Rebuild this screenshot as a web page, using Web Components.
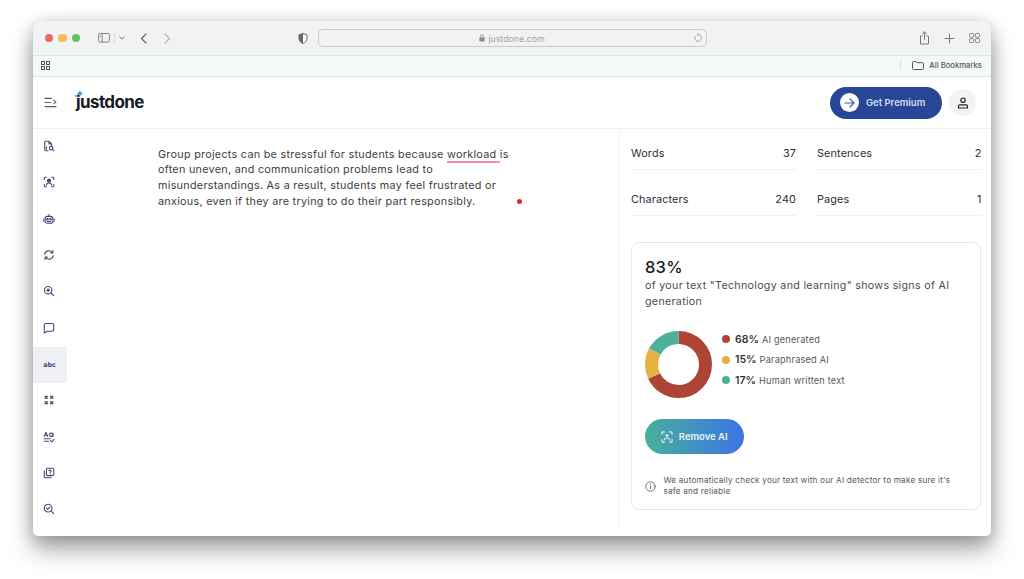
<!DOCTYPE html>
<html lang="en">
<head>
<meta charset="utf-8">
<title>justdone</title>
<style>
  html, body { margin: 0; height: 100%; background: #fff; }
  body { padding: 21px 33px 0; box-sizing: border-box; height: 579px; overflow: hidden; font-family: Inter, "Liberation Sans", sans-serif; }
</style>
</head>
<body>
<browser-window>
  <app-header slot="header"></app-header>
  <side-nav slot="nav"></side-nav>
  <text-editor slot="editor">
    <div>Group projects can be stressful for students because <mark-word>workload</mark-word> is</div>
    <div>often uneven, and communication problems lead to</div>
    <div>misunderstandings. As a result, students may feel frustrated or</div>
    <div>anxious, even if they are trying to do their part responsibly.</div>
  </text-editor>
  <aside-panel slot="panel">
    <stat-grid>
      <stat-item label="Words" value="37"></stat-item>
      <stat-item label="Sentences" value="2"></stat-item>
      <stat-item label="Characters" value="240"></stat-item>
      <stat-item label="Pages" value="1"></stat-item>
    </stat-grid>
    <ai-report></ai-report>
  </aside-panel>
</browser-window>

<script>
const scanIcon = (color) => `
  <svg width="12" height="12" viewBox="0 0 13 13" fill="none" stroke="${color}" stroke-width="1.2" stroke-linecap="round">
    <path d="M1 3.6V2.2A1.2 1.2 0 0 1 2.2 1h1.4M9.4 1h1.4A1.2 1.2 0 0 1 12 2.2v1.4M12 9.4v1.4a1.2 1.2 0 0 1-1.2 1.2H9.4M3.6 12H2.2A1.2 1.2 0 0 1 1 10.800V9.400"/>
    <circle cx="6.500" cy="5" r="1.600" fill="${color}" stroke="none"/>
    <path d="M3.400 9.800c.5-1.600 1.700-2.200 3.100-2.200s2.600.6 3.100 2.200"/>
  </svg>`;

class BrowserWindow extends HTMLElement {
  constructor() {
    super();
    this.attachShadow({ mode: "open" });
  }

  connectedCallback() {
    this.shadowRoot.innerHTML = `
      <style>
        :host {
          display: flex; flex-direction: column;
          width: 958px; height: 515px;
          border-radius: 9px 9px 5px 5px;
          background: #fff;
          box-shadow: 0 14px 24px rgba(0,0,0,.34), 0 2px 16px rgba(0,0,0,.2);
          overflow: hidden;
        }
        .toolbar {
          flex: none; height: 35px; box-sizing: border-box;
          background: #f1f2f4; border-bottom: 1px solid #e2e3e5;
          display: flex; align-items: center;
          position: relative;
        }
        .lights { display: flex; gap: 5.300px; margin-left: 12px; }
        .lights i { width: 8.200px; height: 8.200px; border-radius: 50%; display: block; }
        .group { display: flex; align-items: center; }
        .url {
          width: 389px; height: 18.500px; box-sizing: border-box;
          margin-left: 9.500px;
          border: 1px solid #c9cacd; border-radius: 5px;
          display: flex; align-items: center; justify-content: center; gap: 3px;
          font: 8.800px Inter, "Liberation Sans", sans-serif; color: #a2a3a6;
          position: relative;
        }
        .url svg.reload { position: absolute; right: 3px; top: 3px; }
        .bookmarks {
          flex: none; height: 21px; box-sizing: border-box;
          background: #f3faf8; border-bottom: 1px solid #e4e9e8;
          display: flex; align-items: center; padding: 0 9px 2px 8px;
          font: 500 7.700px Inter, "Liberation Sans", sans-serif; color: #55585a;
        }
        .bookmarks .bar { width: 1px; height: 10px; background: #bdebe0; margin: 0 11px 0 auto; }
        .bookmarks .folder { margin-right: 5px; }
        .body { flex: 1; min-height: 0; display: flex; }
        .main { flex: 1; min-width: 0; min-height: 0; display: flex; }
      </style>
      <div class="toolbar">
        <div class="lights">
          <i style="background:#ee6a5f"></i><i style="background:#f4bd4f"></i><i style="background:#61c454"></i>
        </div>
        <div class="group" style="margin-left:18px">
          <svg width="12" height="10" viewBox="0 0 13 11" fill="none" stroke="#77797c" stroke-width="1"><rect x=".5" y=".5" width="12" height="9.500" rx="1.500"/><path d="M4.500 .5v9.500"/><path d="M1.800 2.500h1.500M1.800 4h1.500" stroke-width=".7"/></svg>
          <span style="width:1px;height:11px;background:#dcdde0;margin:0 4px 0 4px"></span>
          <svg width="6" height="4" viewBox="0 0 6 4" fill="none" stroke="#77797c" stroke-width="1" stroke-linecap="round"><path d="M.7.7 3 3.200 5.300.7"/></svg>
        </div>
        <svg style="margin-left:15px" width="8" height="11" viewBox="0 0 8 11" fill="none" stroke="#66686b" stroke-width="1.200" stroke-linecap="round" stroke-linejoin="round"><path d="M6 1 1.500 5.500 6 10"/></svg>
        <svg style="margin-left:15.300px" width="8" height="11" viewBox="0 0 8 11" fill="none" stroke="#b6b7ba" stroke-width="1.200" stroke-linecap="round" stroke-linejoin="round"><path d="M2 1l4.500 4.500L2 10"/></svg>
        <svg style="margin-left:126.600px" width="10" height="11" viewBox="0 0 10 11"><path d="M5 .5 9 1.800v3.400C9 7.800 7.200 9.600 5 10.500 2.800 9.600 1 7.800 1 5.200V1.800z" fill="#fff" stroke="#66686b"/><path d="M5 .5v10C2.800 9.600 1 7.800 1 5.200V1.800z" fill="#66686b"/></svg>
        <div class="url">
          <svg width="6" height="8" viewBox="0 0 6 8"><rect x=".3" y="3.200" width="5.400" height="4.300" rx=".8" fill="#8c8d90"/><path d="M1.500 3.500V2.200a1.500 1.500 0 0 1 3 0v1.300" fill="none" stroke="#8c8d90" stroke-width=".8"/></svg>
          <span>justdone.com</span>
          <svg class="reload" width="10" height="10" viewBox="0 0 10 10" fill="none" stroke="#9c9da0" stroke-width=".9" stroke-linecap="round"><path d="M5.400 1.500A3.400 3.400 0 1 1 2 3.400"/><path d="M4.400.5 5.600 1.500 4.400 2.700"/></svg>
        </div>
        <div class="group" style="margin-left:auto;margin-right:11.500px;gap:14px">
          <svg width="11" height="14" viewBox="0 0 11 14" fill="none" stroke="#77797c" stroke-width="1" stroke-linecap="round" stroke-linejoin="round"><path d="M3.300 5H1.500v8h8V5H7.700M5.500 8.500V1M3.500 2.800l2-1.800 2 1.800"/></svg>
          <svg width="11" height="11" viewBox="0 0 11 11" stroke="#77797c" stroke-width="1" stroke-linecap="round"><path d="M5.500 1v9M1 5.500h9"/></svg>
          <svg width="11" height="10" viewBox="0 0 11 10" fill="none" stroke="#77797c" stroke-width=".9"><rect x=".5" y=".5" width="4.200" height="3.800" rx="1"/><rect x="6.300" y=".5" width="4.200" height="3.800" rx="1"/><rect x=".5" y="5.700" width="4.200" height="3.800" rx="1"/><rect x="6.300" y="5.700" width="4.200" height="3.800" rx="1"/></svg>
        </div>
      </div>
      <div class="bookmarks">
        <svg width="9" height="9" viewBox="0 0 9 9" fill="none" stroke="#55585a" stroke-width="1"><rect x=".5" y=".5" width="3" height="3"/><rect x="5.500" y=".5" width="3" height="3"/><rect x=".5" y="5.500" width="3" height="3"/><rect x="5.500" y="5.500" width="3" height="3"/></svg>
        <span class="bar"></span>
        <svg class="folder" width="12" height="9" viewBox="0 0 12 9" fill="none" stroke="#55585a" stroke-width="1" stroke-linejoin="round"><path d="M.5 1.500a1 1 0 0 1 1-1h2.500l1 1.200h5.500a1 1 0 0 1 1 1v4.800a1 1 0 0 1-1 1h-9a1 1 0 0 1-1-1z"/></svg>
        <span>All Bookmarks</span>
      </div>
      <slot name="header"></slot>
      <div class="body">
        <slot name="nav"></slot>
        <div class="main">
          <slot name="editor"></slot>
          <slot name="panel"></slot>
        </div>
      </div>
    `;
  }
}

class AppHeader extends HTMLElement {
  constructor() {
    super();
    this.attachShadow({ mode: "open" });
  }

  connectedCallback() {
    this.shadowRoot.innerHTML = `
      <style>
        :host {
          flex: none; display: flex; align-items: center;
          height: 52px; box-sizing: border-box;
          border-bottom: 1px solid #eff0f2;
          padding: 0 15px 0 11px;
          background: #fff;
        }
        .logo {
          position: relative; margin-left: 19px; padding-bottom: 1px;
          font: 700 17px/1 Inter, "Liberation Sans", sans-serif;
          letter-spacing: -.6px; color: #141a26;
        }
        .logo svg { position: absolute; left: -2px; top: -5px; }
        .premium {
          margin-left: auto;
          display: flex; align-items: center; gap: 7.500px;
          width: 112px; height: 32px; box-sizing: border-box; padding-left: 10px;
          border-radius: 16px; background: #274796;
          font: 600 9.500px Inter, "Liberation Sans", sans-serif; color: #d5def2;
        }
        .premium b {
          width: 19px; height: 19px; border-radius: 50%; background: #fff;
          display: flex; align-items: center; justify-content: center;
        }
        .user {
          margin-left: 7.500px; width: 27px; height: 27px; border-radius: 50%;
          background: #f3f3f4; display: flex; align-items: center; justify-content: center;
        }
      </style>
      <svg width="13" height="11" viewBox="0 0 14 12" fill="none" stroke="#55585c" stroke-width="1.100" stroke-linecap="round" stroke-linejoin="round"><path d="M1 1.500h7M1 6h6M1 10.500h12M10.500 3.300 13 5.500l-2.500 2"/></svg>
      <div class="logo">
        <svg width="10" height="10" viewBox="0 0 10 10"><path d="M6 1 7 3.500 9.500 4.500 7 5.500 6 8 5 5.500 2.500 4.500 5 3.500z" fill="#3f97d8"/><circle cx="1.800" cy="6.800" r=".9" fill="#3f97d8"/></svg>
        justdone
      </div>
      <div class="premium">
        <b><svg width="11" height="10" viewBox="0 0 11 10" fill="none" stroke="#3d5cab" stroke-width="1.200" stroke-linecap="round" stroke-linejoin="round"><path d="M1 5h9M6 1l4 4-4 4"/></svg></b>
        <span>Get Premium</span>
      </div>
      <div class="user">
        <svg width="12" height="12" viewBox="0 0 12 12" fill="none" stroke="#222" stroke-width="1.200" stroke-linejoin="round"><circle cx="6" cy="3.200" r="2.200"/><path d="M1.500 11V9.300C1.500 8.400 2.200 7.800 3 7.800h6c.8 0 1.500.6 1.500 1.500V11z"/></svg>
      </div>
    `;
  }
}

class SideNav extends HTMLElement {
  constructor() {
    super();
    this.attachShadow({ mode: "open" });
  }

  connectedCallback() {
    const c = "#474c75";
    const icon = (inner) => `<svg width="12" height="12" viewBox="0 0 14 14" fill="none" stroke="${c}" stroke-width="1.300" stroke-linecap="round" stroke-linejoin="round">${inner}</svg>`;
    const items = [
      icon(`<path d="M6 12.500H3a1 1 0 0 1-1-1v-9a1 1 0 0 1 1-1h4l3 3v2.500M7 1.500v3h3"/><path d="M4 8v2.500"/><circle cx="9.500" cy="9.500" r="2"/><path d="m11 11 1.500 1.500"/>`),
      icon(`<path d="M1.500 4V2.500a1 1 0 0 1 1-1H4M10 1.500h1.500a1 1 0 0 1 1 1V4M12.500 10v1.500a1 1 0 0 1-1 1H10M4 12.500H2.500a1 1 0 0 1-1-1V10"/><circle cx="7" cy="5.500" r="1.800" fill="${c}"/><path d="M3.800 10.500C4.300 8.800 5.500 8.200 7 8.200s2.700.6 3.200 2.300"/>`),
      icon(`<rect x="2.500" y="4" width="9" height="8" rx="2.500"/><path d="M7 1.500V4M1 7v2.500M13 7v2.500"/><circle cx="5.200" cy="7.300" r=".9" fill="${c}"/><circle cx="8.800" cy="7.300" r=".9" fill="${c}"/><path d="M5 10h4"/>`),
      icon(`<path d="M2 6.200A5 5 0 0 1 11 4.200M12 7.800a5 5 0 0 1-9 2"/><path d="M11.500 1.800v2.700H9M2.500 12.200V9.500H5"/>`),
      icon(`<circle cx="6" cy="6" r="4.300"/><circle cx="6" cy="6" r="1.800" fill="${c}" stroke="none"/><path d="m9.300 9.300 3.200 3.200"/>`),
      icon(`<path d="M3.500 1.800h7a2 2 0 0 1 2 2v5a2 2 0 0 1-2 2H5l-3.500 2V3.800a2 2 0 0 1 2-2z"/>`),
      `<span class="abc">abc</span>`,
      icon(`<path d="M2.500 2.500 5 5M5 2.500 2.500 5M9 2.500 11.500 5M11.500 2.500 9 5M2.500 9 5 11.500M5 9 2.500 11.500M9 9l2.500 2.500M11.500 9 9 11.500" stroke-width="1.600"/>`),
      icon(`<path d="M1.500 6.500 3.500 1.500 5.500 6.500M2.200 5h2.600"/><circle cx="9.500" cy="4.500" r="2"/><path d="M11.500 2.500v4M1.500 9h7M1.500 12h5M8.500 11.300l1.500 1.500 3-3"/>`),
      icon(`<rect x="4" y="1.500" width="8.500" height="8.500" rx="1.200"/><path d="M1.500 4.500v7a1 1 0 0 0 1 1h7"/><path d="M7 4.300c.2-1 2.400-1 2.400.4 0 .9-1.100 1-1.100 1.800M8.300 8.200v.1"/>`),
      icon(`<circle cx="6" cy="6" r="4.500"/><path d="m4 6 1.500 1.500L8.200 4.800M9.500 9.500l3 3"/>`)
    ];
    this.shadowRoot.innerHTML = `
      <style>
        :host { flex: none; width: 34px; display: flex; flex-direction: column; background: #fff; }
        .item { height: 36.300px; flex: none; display: flex; align-items: center; justify-content: center; }
        .item svg { margin: 0 2px 2px 0; }
        .item.active { background: #eff0f6; }
        .abc { font: 700 6.500px/1 "DejaVu Sans", sans-serif; color: #474c75; letter-spacing: -.1px; margin-right: 1px; }
      </style>
      ${items.map((svg, i) => `<div class="item${i === 6 ? " active" : ""}">${svg}</div>`).join("")}
    `;
  }
}

class MarkWord extends HTMLElement {
  constructor() {
    super();
    this.attachShadow({ mode: "open" });
    this.shadowRoot.innerHTML = `
      <style>
        :host {
          display: inline;
          text-decoration: underline 1.500px #f2899c;
          text-underline-offset: 3px;
          text-decoration-skip-ink: none;
        }
      </style>
      <slot></slot>
    `;
  }
}

class TextEditor extends HTMLElement {
  constructor() {
    super();
    this.attachShadow({ mode: "open" });
    this.shadowRoot.innerHTML = `
      <style>
        :host {
          flex: none; width: 553px; box-sizing: border-box; display: block;
          margin-bottom: 8px;
          padding: 17.500px 0 0 91px; position: relative;
          border-right: 1px solid #f0f1f3;
        }
        .text {
          width: 380px;
          font: 400 10.800px/15.900px Inter, "Liberation Sans", sans-serif;
          letter-spacing: .28px; color: #3b3d42;
        }
        .dot { position: absolute; left: 449.500px; top: 69.500px; width: 5px; height: 5px; border-radius: 50%; background: #e3242b; }
      </style>
      <div class="text"><slot></slot></div>
      <span class="dot"></span>
    `;
  }
}

class AsidePanel extends HTMLElement {
  constructor() {
    super();
    this.attachShadow({ mode: "open" });
    this.shadowRoot.innerHTML = `
      <style>
        :host {
          flex: 1; min-width: 0; display: flex; flex-direction: column;
          padding: 14px 9px 0 11px; gap: 26px;
        }
      </style>
      <slot></slot>
    `;
  }
}

class StatGrid extends HTMLElement {
  constructor() {
    super();
    this.attachShadow({ mode: "open" });
    this.shadowRoot.innerHTML = `
      <style>
        :host { display: grid; grid-template-columns: 165px 164.500px; column-gap: 21px; row-gap: 19px; }
      </style>
      <slot></slot>
    `;
  }
}

class StatItem extends HTMLElement {
  constructor() {
    super();
    this.attachShadow({ mode: "open" });
  }

  connectedCallback() {
    this.shadowRoot.innerHTML = `
      <style>
        :host {
          display: flex; justify-content: space-between; align-items: center;
          height: 27px; box-sizing: border-box; padding-bottom: 6px;
          border-bottom: 1px solid #eff0f2;
          font: 400 10.800px Inter, "Liberation Sans", sans-serif; color: #2c2e33;
          letter-spacing: .15px;
        }
      </style>
      <span>${this.getAttribute("label")}</span>
      <span>${this.getAttribute("value")}</span>
    `;
  }
}

class AiReport extends HTMLElement {
  constructor() {
    super();
    this.attachShadow({ mode: "open" });
  }

  connectedCallback() {
    this.shadowRoot.innerHTML = `
      <style>
        :host {
          display: block; width: 350px; height: 268px; box-sizing: border-box;
          border: 1px solid #e6e7ea; border-radius: 8px;
          padding: 14px 13px 0 13px;
          color: #3b3d42;
        }
        .pct { font: 500 16.500px/20px Inter, "Liberation Sans", sans-serif; color: #1a1c20; letter-spacing: .2px; }
        .lead { margin-top: 1px; width: 322px; font: 400 10.700px/15.500px Inter, "Liberation Sans", sans-serif; letter-spacing: .3px; color: #4a4c51; }
        .chart { display: flex; align-items: flex-start; margin-top: 22px; gap: 10px; }
        ul { list-style: none; margin: .5px 0 0; padding: 0; display: flex; flex-direction: column; gap: 5.500px; }
        li { display: flex; align-items: center; height: 15px; font: 400 9.200px Inter, "Liberation Sans", sans-serif; letter-spacing: .2px; color: #55575c; white-space: nowrap; }
        li i { width: 8px; height: 8px; border-radius: 50%; display: block; margin-right: 5px; }
        li b { font: 600 10.500px Inter, "Liberation Sans", sans-serif; color: #33353a; letter-spacing: 0; margin-right: 3px; }
        .remove {
          margin-top: 21px; width: 98.500px; height: 35px; box-sizing: border-box;
          border-radius: 18px; background: linear-gradient(90deg, #47b09a, #3d74e6);
          display: flex; align-items: center; justify-content: center; gap: 6px;
          font: 600 9.500px Inter, "Liberation Sans", sans-serif; color: #eaf3f5;
        }
        .note { margin-top: 21px; display: flex; align-items: center; gap: 7.500px; font: 400 8.200px/11px Inter, "Liberation Sans", sans-serif; letter-spacing: .2px; color: #55575c; }
        .note span { width: 305px; }
      </style>
      <div class="pct">83%</div>
      <div class="lead">of your text "Technology and learning" shows signs of AI generation</div>
      <div class="chart">
        <svg width="67" height="67" viewBox="0 0 67 67" style="flex:none">
          <g fill="none" stroke-width="13" transform="rotate(-90 33.500 33.500)">
            <circle cx="33.500" cy="33.500" r="27" pathLength="100" stroke="#ad4436" stroke-dasharray="68 32"/>
            <circle cx="33.500" cy="33.500" r="27" pathLength="100" stroke="#e7b142" stroke-dasharray="15 85" stroke-dashoffset="-68"/>
            <circle cx="33.500" cy="33.500" r="27" pathLength="100" stroke="#4cb09b" stroke-dasharray="17 83" stroke-dashoffset="-83"/>
          </g>
        </svg>
        <ul>
          <li><i style="background:#ad4436"></i><b>68%</b> AI generated</li>
          <li><i style="background:#e7b142"></i><b>15%</b> Paraphrased AI</li>
          <li><i style="background:#4cb09b"></i><b>17%</b> Human written text</li>
        </ul>
      </div>
      <div class="remove">${scanIcon("#e4eef2")}<span>Remove AI</span></div>
      <div class="note">
        <svg width="11" height="11" viewBox="0 0 11 11" fill="none" stroke="#66686c" stroke-width=".9" stroke-linecap="round" style="flex:none"><circle cx="5.500" cy="5.500" r="4.700"/><path d="M5.500 5v2.800M5.500 3.200v.1"/></svg>
        <span>We automatically check your text with our AI detector to make sure it's safe and reliable</span>
      </div>
    `;
  }
}

customElements.define("browser-window", BrowserWindow);
customElements.define("app-header", AppHeader);
customElements.define("side-nav", SideNav);
customElements.define("mark-word", MarkWord);
customElements.define("text-editor", TextEditor);
customElements.define("aside-panel", AsidePanel);
customElements.define("stat-grid", StatGrid);
customElements.define("stat-item", StatItem);
customElements.define("ai-report", AiReport);
</script>
</body>
</html>
